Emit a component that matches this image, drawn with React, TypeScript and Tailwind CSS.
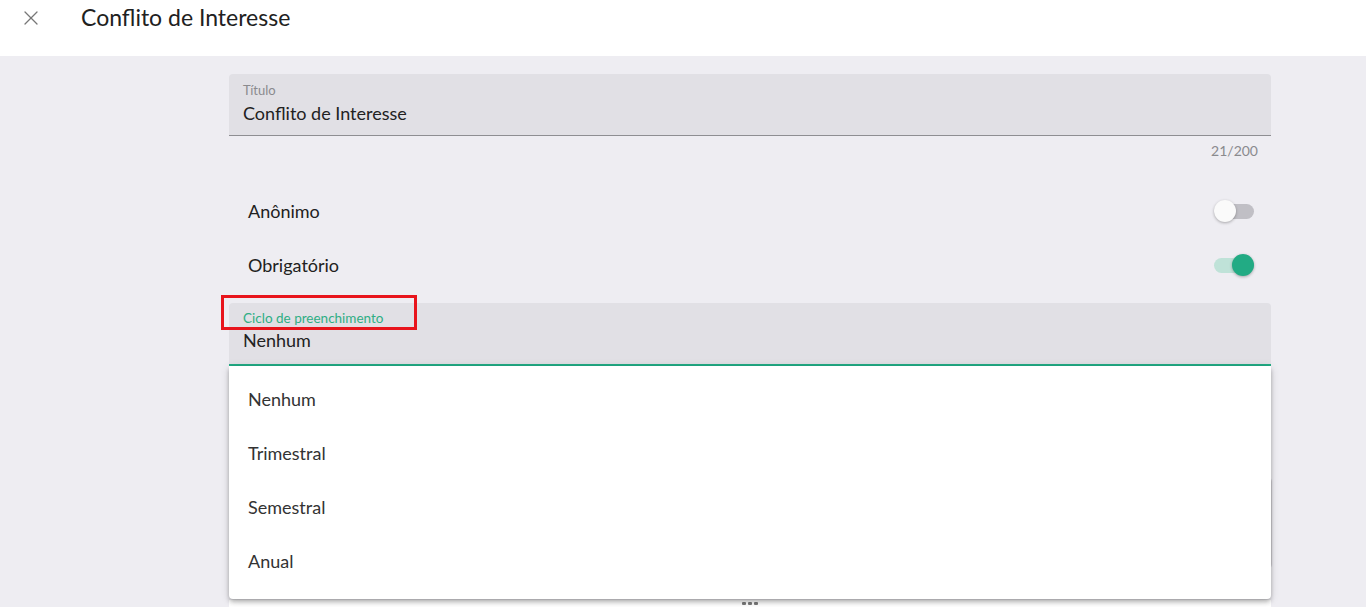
import { X } from 'lucide-react';

function Toggle({ on }: { on: boolean }) {
  return (
    <div className="relative w-[40px] h-[22px] flex items-center">
      <div className={`w-[40px] h-[15px] rounded-full ${on ? 'bg-[#bfe2d8]' : 'bg-[#c0bfc5]'}`} />
      <div
        className={`absolute top-0 w-[22px] h-[22px] rounded-full shadow-[0_1px_3px_rgba(0,0,0,0.3)] ${
          on ? 'right-0 bg-[#22ab84]' : 'left-0 bg-[#fafafa]'
        }`}
      />
    </div>
  );
}

const options = ['Nenhum', 'Trimestral', 'Semestral', 'Anual'];

export default function App() {
  return (
    <div className="h-[607px] overflow-hidden bg-[#eeedf2] font-['Lato','Liberation_Sans',sans-serif] text-[#212121]">
      <header className="h-[56px] bg-white flex items-start">
        <div className="w-[62px] flex justify-center pt-[6px]">
          <X className="w-[24px] h-[24px] text-[#777]" strokeWidth={1.3} />
        </div>
        <h1 className="ml-[19px] text-[23px] leading-none pt-[6px]">Conflito de Interesse</h1>
      </header>

      <main className="ml-[229px] w-[1042px] pt-[18px]">
        <div className="h-[62px] bg-[#e1e0e5] rounded-t-[4px] border-b border-[#8e8e92] px-[14px] pt-[9px]">
          <div className="text-[13px] leading-[14px] text-[#8a8a8e]">Título</div>
          <div className="text-[18px] leading-[22px] mt-[5px] text-[#222]">Conflito de Interesse</div>
        </div>
        <div className="text-right pr-[13px] text-[14px] text-[#8a8a8e] mt-[7px] leading-[16px]">21/200</div>

        <div className="mt-[40px] flex items-center justify-between pl-[19px] pr-[17px] h-[24px]">
          <span className="text-[18px]">Anônimo</span>
          <Toggle on={false} />
        </div>
        <div className="mt-[30px] flex items-center justify-between pl-[19px] pr-[17px] h-[24px]">
          <span className="text-[18px]">Obrigatório</span>
          <Toggle on={true} />
        </div>

        <div className="relative mt-[26px]">
          <div className="h-[63px] bg-[#e1e0e5] rounded-t-[4px] border-b-2 border-[#22ab84] px-[14px] pt-[8px]">
            <div className="text-[13.5px] leading-[14px] text-[#2fae84]">Ciclo de preenchimento</div>
            <div className="text-[18px] leading-[22px] mt-[4px] text-[#222]">Nenhum</div>
          </div>
          <div className="absolute left-[-8px] top-[-8px] w-[196px] h-[35px] border-[3px] border-[#e8141c] z-20" />

          <div className="mt-[112px] h-[90px] bg-white rounded-[4px] shadow-[1px_0_1px_rgba(0,0,0,0.15)]" />
          <div className="mt-[32px] h-[40px] bg-white flex justify-center pt-[2px]">
            <div className="grid grid-cols-3 gap-[2px] w-[16px]">
              {Array.from({ length: 6 }).map((_, i) => (
                <span key={i} className="w-[4px] h-[3px] bg-[#7a7a7a] rounded-[1px]" />
              ))}
            </div>
          </div>

          <div className="absolute left-0 top-[63px] w-[1042px] bg-white rounded-b-[4px] pt-[6px] pb-[11px] z-10 shadow-[0_2px_4px_-1px_rgba(0,0,0,0.2),0_4px_5px_0_rgba(0,0,0,0.14),0_1px_10px_0_rgba(0,0,0,0.12)]">
            {options.map((o) => (
              <div key={o} className="h-[54px] flex items-center pl-[19px] text-[18px] text-[#333]">
                {o}
              </div>
            ))}
          </div>
        </div>
      </main>
    </div>
  );
}
